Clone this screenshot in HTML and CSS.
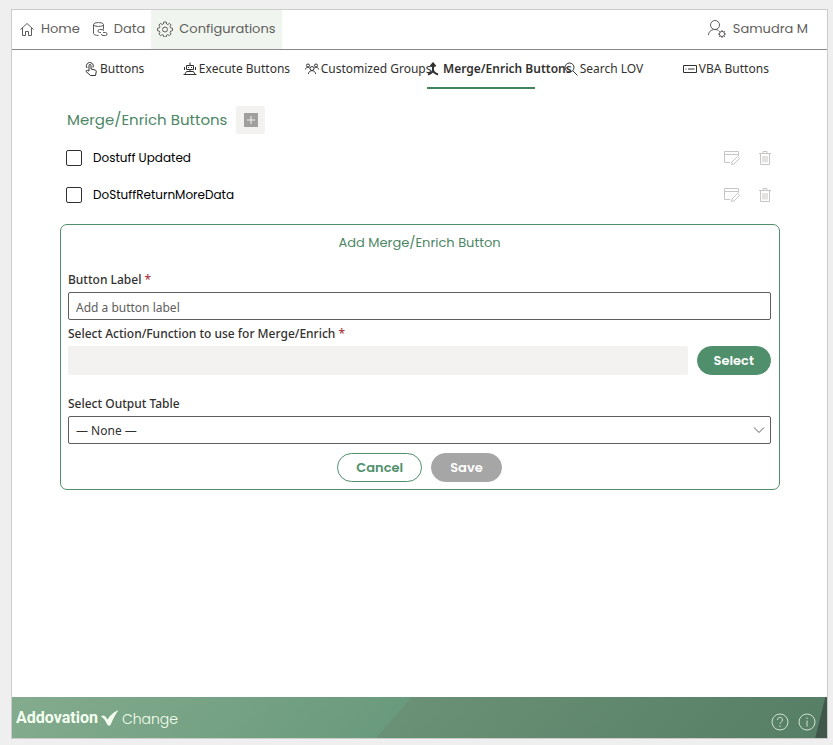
FILE: index.html
```
<!DOCTYPE html>
<html lang="en">

<head>
  <meta charset="UTF-8">
  <meta name="viewport" content="width=device-width, initial-scale=1.0">
  <title>Addovation Change - Configurations</title>
  <link rel="stylesheet" href="styles.css">
</head>

<body>
  <div class="app">
    <header class="topbar">
      <nav class="menu">
        <a href="#home">
          <svg width="16" height="16" viewBox="0 0 16 16"><path d="M1.500 8.500 8 2.500l6.500 6M3.500 7v7.500h3v-4h3v4h3V7" /></svg>
          Home
        </a>
        <a href="#data">
          <svg width="16" height="16" viewBox="0 0 16 16"><ellipse cx="6.500" cy="3.500" rx="5" ry="2" /><path d="M1.500 3.500v9c0 1 2 2 5 2M11.500 3.500v5M9 11.500H7.500a1.500 1.500 0 0 1 0-3H10a1.500 1.500 0 0 1 1.500 1.500M11 11.500h2.500a1.500 1.500 0 0 1 0 3H11A1.500 1.500 0 0 1 9.500 13" /></svg>
          Data
        </a>
        <a href="#configurations" class="current">
          <svg width="16" height="16" viewBox="0 0 16 16"><path d="M6.800 1h2.400l.4 2 1.200.5 1.700-1.100 1.600 1.600-1 1.700.5 1.200 1.900.4v2.400l-1.900.4-.5 1.200 1 1.700-1.600 1.600-1.700-1-1.200.5-.4 1.900H6.800l-.4-1.900-1.200-.5-1.700 1L1.900 13l1-1.700-.5-1.200-1.900-.4V7.300l1.900-.4.500-1.200-1-1.700 1.600-1.600 1.700 1.100L6.400 3z" /><circle cx="8" cy="8.500" r="2.500" /></svg>
          Configurations
        </a>
      </nav>
      <a href="#user" class="user">
        <svg width="20" height="20" viewBox="0 0 20 20"><circle cx="8" cy="6" r="4.500" /><path d="M1.500 16c0-3 2.500-5.500 6.500-5.500 1.500 0 2.500.3 3.500 1" /><circle cx="15" cy="15" r="2.600" /><path d="M15 11v1.500M15 17.500V19M11 15h1.500M17.500 15H19M12.200 12.200l1 1M16.800 16.800l1 1M17.800 12.200l-1 1M13.200 16.800l-1 1" /></svg>
        Samudra M
      </a>
    </header>

    <main>
      <nav class="tabs">
        <a href="#buttons">
          <svg width="14" height="14" viewBox="0 0 14 14"><path d="M5 9V3.500a1 1 0 0 1 2 0V7l4 1c1 .3 1.500 1 1.200 2l-.7 3.500H6.500L2 9.500c-.3-1 .8-1.500 1.500-1zM3 6a3.500 3.500 0 1 1 6-.5" /></svg>
          Buttons
        </a>
        <a href="#execute">
          <svg width="14" height="14" viewBox="0 0 14 14"><path d="M7 3V.5M3.500 3.500h7v4h-7zM1.500 5v3M12.500 5v3M7 7.500v2M3.500 9.500h7M3.500 9.500 1.500 13M10.500 9.500l2 3.500M.5 12.500h13M5 5.500h1M8 5.500h1" /></svg>
          Execute Buttons
        </a>
        <a href="#groups">
          <svg width="14" height="14" viewBox="0 0 14 14"><circle cx="3" cy="3.500" r="1.500" /><circle cx="11" cy="3.500" r="1.500" /><circle cx="7" cy="6.500" r="2" /><path d="M.5 7.500C.5 5.500 3 4.500 4.500 6M13.500 7.500c0-2-2.500-3-4-1.500M3.500 12c0-4.500 7-4.500 7 0" /></svg>
          Customized Groups
        </a>
        <a href="#merge" class="selected">
          <svg width="12" height="14" viewBox="0 0 12 14"><path d="M6 9V2M3.500 4.500 6 1.500l2.500 3M6 7.500c0 2.500-2 4-5 5M6 7.500c0 2.500 2 4 5 5" /></svg>
          Merge/Enrich Buttons
        </a>
        <a href="#search">
          <svg width="14" height="14" viewBox="0 0 14 14"><circle cx="5.500" cy="5.500" r="4.500" /><path d="m9 9 4.500 4.500" /></svg>
          Search LOV
        </a>
        <a href="#vba">
          <svg width="14" height="14" viewBox="0 0 14 14"><path d="M.5 3.500h13v7H.5zM5 7h6.500M2.500 7h1" /></svg>
          VBA Buttons
        </a>
      </nav>

      <div class="heading">
        <h1>Merge/Enrich Buttons</h1>
        <button type="button" class="add" aria-label="Add button">
          <svg width="14" height="14" viewBox="0 0 14 14"><path class="box" d="M0 0h14v14H0z" /><path d="M7 3v8M3 7h8" /></svg>
        </button>
      </div>

      <ul class="list">
        <li>
          <label><input type="checkbox"> Dostuff Updated</label>
          <button type="button" aria-label="Edit">
            <svg width="16" height="16" viewBox="0 0 16 16"><path d="M6 12.500H.5v-11h14V6M.5 4.500h14M7.500 14.500l.5-2.500 5.500-5.500 2 2L10 14z" /></svg>
          </button>
          <button type="button" aria-label="Delete">
            <svg width="12" height="16" viewBox="0 0 12 16"><path d="M0 3.500h12M4 3.500v-2h4v2M1.500 3.500v11h9v-11M4 6v6.500M6 6v6.500M8 6v6.500" /></svg>
          </button>
        </li>
        <li>
          <label><input type="checkbox"> DoStuffReturnMoreData</label>
          <button type="button" aria-label="Edit">
            <svg width="16" height="16" viewBox="0 0 16 16"><path d="M6 12.500H.5v-11h14V6M.5 4.500h14M7.500 14.500l.5-2.500 5.500-5.500 2 2L10 14z" /></svg>
          </button>
          <button type="button" aria-label="Delete">
            <svg width="12" height="16" viewBox="0 0 12 16"><path d="M0 3.500h12M4 3.500v-2h4v2M1.500 3.500v11h9v-11M4 6v6.500M6 6v6.500M8 6v6.500" /></svg>
          </button>
        </li>
      </ul>

      <form class="card">
        <h2>Add Merge/Enrich Button</h2>
        <div class="field">
          <label for="label">Button Label <span class="required">*</span></label>
          <input type="text" id="label" name="label" placeholder="Add a button label">
        </div>
        <div class="field action">
          <label for="action">Select Action/Function to use for Merge/Enrich <span class="required">*</span></label>
          <div class="picker">
            <input type="text" id="action" name="action" disabled>
            <button type="button" class="pill primary">Select</button>
          </div>
        </div>
        <div class="field">
          <label for="table">Select Output Table</label>
          <div class="dropdown">
            <select id="table" name="table">
              <option>— None —</option>
            </select>
            <svg width="12" height="12" viewBox="0 0 12 12"><path d="m1 3.500 5 5 5-5" /></svg>
          </div>
        </div>
        <div class="actions">
          <button type="button" class="pill">Cancel</button>
          <button type="submit" class="pill save" disabled>Save</button>
        </div>
      </form>
    </main>

    <footer>
      <div class="brand">
        <strong>Addovation</strong>
        <svg width="18" height="16" viewBox="0 0 18 16"><path d="M0 6.500c2-2 4-1.500 6.500 3C9 5.500 12.500 2 17.500 0 14.500 4 12 9 9.500 15c-1 1-2 1-3 0C4.500 11 3 8 0 6.500z" /></svg>
        <span>Change</span>
      </div>
      <div class="help">
        <a href="#help" aria-label="Help">
          <svg width="18" height="18" viewBox="0 0 18 18"><circle cx="9" cy="9" r="8" /><path d="M6.500 7c0-3.500 5-3.500 5 0C11.500 9 9 9 9 11M9 12.500v1.500" /></svg>
        </a>
        <a href="#info" aria-label="Info">
          <svg width="18" height="18" viewBox="0 0 18 18"><circle cx="9" cy="9" r="8" /><path d="M9 7.500v6M9 4.500V6" /></svg>
        </a>
      </div>
    </footer>
  </div>
</body>

</html>
```
FILE: styles.css
```
* {
  box-sizing: border-box;
}

body {
  margin: 0;
  padding: 9px 5px 6px 11px;
  min-height: 100vh;
  display: flex;
  background-color: #efefef;
  color: #323130;
  font-family: "Noto Sans", sans-serif;
  font-size: 12px;
  line-height: 20px;
}

a {
  color: inherit;
  text-decoration: none;
}

svg {
  flex: none;
  fill: none;
  stroke: currentColor;
}

button,
input,
select {
  font: inherit;
}

.app {
  flex: 1;
  display: flex;
  flex-direction: column;
  border: 1px solid #cccccc;
  background-color: white;
}

/* top bar */
.topbar {
  display: flex;
  justify-content: space-between;
  height: 40px;
  padding-left: 1px;
  border-bottom: 1px solid #8a8886;
  color: #605e5c;
  font-family: Poppins, Inter, sans-serif;
  font-size: 13px;
}

.menu {
  display: flex;
}

.menu a,
.user {
  display: flex;
  align-items: center;
  gap: 6px;
  padding: 0 6px 2px;
}

.menu .current {
  background-color: #f0f6ef;
}

.user {
  padding-right: 19px;
}

/* tabs */
main {
  flex: 1;
  padding: 0 47px 0 48px;
}

.tabs {
  display: grid;
  grid-template-columns: repeat(6, minmax(0, 1fr));
  gap: 14px;
}

.tabs a {
  display: flex;
  align-items: center;
  justify-content: safe center;
  gap: 2px;
  height: 39px;
  border-bottom: 2px solid transparent;
  white-space: nowrap;
}

.tabs .selected {
  gap: 4px;
  border-bottom-color: #438460;
  font-weight: 600;
}

.selected svg {
  stroke-width: 2;
}

/* list of buttons */
.heading {
  display: flex;
  align-items: center;
  gap: 9px;
  margin-top: 17px;
  padding-left: 7px;
}

h1,
h2 {
  margin: 0;
  color: #4c8664;
  font-family: Poppins, Inter, sans-serif;
}

h1 {
  font-size: 15px;
  font-weight: 400;
}

.add {
  display: grid;
  place-items: center;
  width: 29px;
  height: 28px;
  padding: 0;
  border: 0;
  border-radius: 2px;
  background-color: #f3f2f1;
  color: #f3f2f1;
}

.add .box {
  fill: #a19f9d;
  stroke: none;
}

.list {
  margin: 5px 0 11px;
  padding: 0 9px 0 6px;
  list-style: none;
}

.list li {
  display: flex;
  align-items: center;
  gap: 19px;
  height: 37px;
}

.list label {
  display: flex;
  align-items: center;
  gap: 11px;
  margin-right: auto;
  color: black;
  font-family: Poppins, Inter, sans-serif;
}

.list input {
  appearance: none;
  width: 16px;
  height: 16px;
  margin: 0;
  border: 1px solid #323130;
  border-radius: 2px;
}

.list button {
  display: flex;
  padding: 0;
  border: 0;
  background: none;
  color: #c8c6c4;
}

/* form */
.card {
  padding: 8px 8px 7px 7px;
  border: 1px solid #4f8f6b;
  border-radius: 7px;
}

h2 {
  margin-bottom: 17px;
  font-size: 13px;
  font-weight: 400;
  line-height: 20px;
  text-align: center;
}

.field {
  display: flex;
  flex-direction: column;
  gap: 2px;
  margin-bottom: 4px;
}

.field label {
  font-weight: 500;
}

.required {
  color: #a4262c;
  font-weight: 400;
}

.field input,
.field select {
  width: 100%;
  height: 28px;
  padding: 2px 7px 0;
  border: 1px solid #605e5c;
  border-radius: 2px;
  background-color: white;
  color: #323130;
}

.field input::placeholder {
  color: #605e5c;
}

.action {
  margin-bottom: 19px;
}

.picker {
  display: flex;
  gap: 9px;
}

.picker input {
  flex: 1;
  height: 29px;
  border: 0;
  background-color: #f3f2f1;
}

.dropdown {
  display: grid;
  align-items: center;
}

.dropdown select,
.dropdown svg {
  grid-area: 1 / 1;
}

.dropdown select {
  appearance: none;
}

.dropdown svg {
  justify-self: end;
  margin-right: 6px;
  color: #605e5c;
  pointer-events: none;
}

.actions {
  display: flex;
  justify-content: center;
  gap: 9px;
  margin-top: 9px;
}

.pill {
  height: 29px;
  padding: 0 18px;
  border: 1px solid #4f8f6b;
  border-radius: 15px;
  background-color: white;
  color: #4f8f6b;
  font-family: Poppins, Inter, sans-serif;
  font-size: 13px;
  font-weight: 600;
}

.primary {
  padding: 0 16px;
  background-color: #4f8f6b;
  color: white;
}

.save {
  border-color: #a6a6a6;
  background-color: #a6a6a6;
  color: white;
}

/* footer */
footer {
  display: flex;
  justify-content: space-between;
  height: 41px;
  padding: 0 11px 0 4px;
  background:
    linear-gradient(104deg, transparent calc(100% - 12px), #40584a calc(100% - 11px)),
    linear-gradient(131deg, #84ab8d, #6a9a7d 47%, #6a9175 47%, #567e66);
  color: #f4fff0;
}

.brand,
.help {
  display: flex;
  align-items: center;
}

.brand {
  gap: 3px;
}

.brand strong {
  font-family: Roboto, sans-serif;
  font-size: 16px;
}

.brand svg {
  fill: currentColor;
  stroke: none;
}

.brand span {
  padding-top: 2px;
  font-family: Poppins, Inter, sans-serif;
  font-size: 14px;
  font-weight: 300;
}

.help {
  gap: 9px;
  padding-top: 8px;
  color: #cfe3cd;
}

.help a {
  display: flex;
}
```
